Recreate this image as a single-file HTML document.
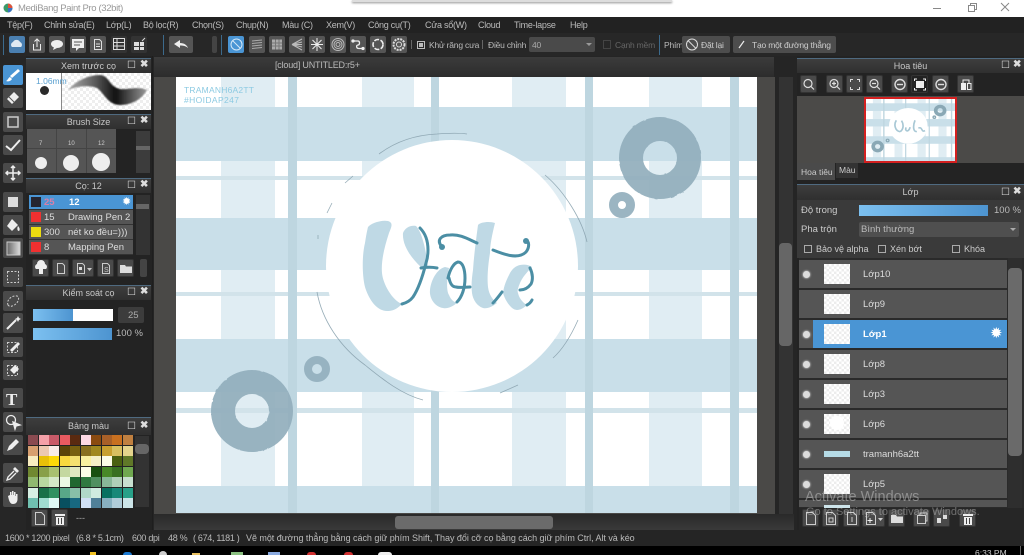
<!DOCTYPE html>
<html lang="vi"><head><meta charset="utf-8"><title>MediBang Paint Pro</title>
<style>
*{box-sizing:border-box}
html,body{margin:0;padding:0;width:1024px;height:555px;overflow:hidden;background:#1e1e1e}
body{position:relative;font-family:"Liberation Sans","Noto Sans CJK SC",sans-serif;color:#ccc;font-size:9px;filter:blur(.3px)}
div,span.a,svg.a{position:absolute}
.t{white-space:nowrap;line-height:1}
.m{top:21px;font-size:9px;letter-spacing:-.25px;color:#bbb;white-space:nowrap;line-height:1}
.o{top:41px;font-size:8.5px;letter-spacing:-.2px;color:#bbb;white-space:nowrap;line-height:1}
.st{top:534px;font-size:9px;letter-spacing:-.3px;color:#bbb;white-space:nowrap;line-height:1}
.h{background:linear-gradient(#3d3d3d,#2f2f2f);border-top:1px solid #4f6a80;color:#c8c8c8;text-align:center;font-size:9px;line-height:14px}
.tb{background:#4a4a4a;border-radius:2px;width:20px;height:20px;left:3px}
.tb svg{position:absolute;left:0;top:0}
.b{background:#555;border-radius:2px;width:16px;height:17px;top:36px}
.b svg{position:absolute;left:0;top:0}
.sb{background:#4a4a4a;border:1px solid #333;border-radius:2px}
.sb svg{position:absolute;left:0;top:0}
.x{font-weight:bold;color:#ddd;font-size:10px}
.r{left:799px;width:208px;height:29px;background:#555;border-bottom:1px solid #2a2a2a}
.e{left:803px;width:7px;height:7px;border-radius:50%;background:#ddd;box-shadow:0 0 2px #fff}
.th{left:824px;width:26px;height:20px;background-color:#fff;background-image:linear-gradient(45deg,#ececec 25%,transparent 25%,transparent 75%,#ececec 75%),linear-gradient(45deg,#ececec 25%,transparent 25%,transparent 75%,#ececec 75%);background-size:5px 5px;background-position:0 0,2.5px 2.5px}
.n{left:863px;font-size:9.5px;color:#ddd}
.ck{width:8px;height:8px;border:1px solid #aaa;top:245px}
.p{width:10px;height:9.5px}
.br{left:29px;width:104px;height:15px;background:#555;border-bottom:1px solid #333;font-size:9.5px;line-height:15px;color:#ddd}
</style></head><body>

<!-- title bar -->
<div style="left:0;top:0;width:1024px;height:17px;background:#fff"></div>
<div style="left:352px;top:0;width:320px;height:2px;background:#ddd;box-shadow:0 1px 2px #888"></div>
<svg class="a" style="left:3px;top:3px" width="11" height="11"><circle cx="5" cy="5" r="4.5" fill="#3a9a6a"/><path d="M5 5V.5A4.5 4.5 0 0 1 9.5 5Z" fill="#e0503a"/><path d="M5 5H9.5A4.5 4.5 0 0 1 5 9.5Z" fill="#3a70c0"/></svg>
<div class="t" style="left:18px;top:4px;font-size:9.5px;letter-spacing:-.35px;color:#999">MediBang Paint Pro (32bit)</div>
<svg class="a" style="left:925px;top:2px" width="99" height="14" fill="none" stroke="#888"><path d="M8 6.500H16"/><rect x="43.500" y="3.500" width="6" height="6"/><path d="M45.500 3.500V1.500H51.500V7.500H49.500"/><path d="M76 1L84 9M84 1L76 9"/></svg>

<!-- menu -->
<div style="left:0;top:17px;width:1024px;height:16px;background:#222"></div>
<div class="m" style="left:7px">Tệp(F)</div>
<div class="m" style="left:44px">Chỉnh sửa(E)</div>
<div class="m" style="left:106px">Lớp(L)</div>
<div class="m" style="left:143px">Bộ lọc(R)</div>
<div class="m" style="left:192px">Chọn(S)</div>
<div class="m" style="left:236px">Chụp(N)</div>
<div class="m" style="left:282px">Màu (C)</div>
<div class="m" style="left:326px">Xem(V)</div>
<div class="m" style="left:368px">Công cụ(T)</div>
<div class="m" style="left:425px">Cửa sổ(W)</div>
<div class="m" style="left:478px">Cloud</div>
<div class="m" style="left:514px">Time-lapse</div>
<div class="m" style="left:570px">Help</div>

<!-- toolbar -->
<div style="left:0;top:33px;width:1024px;height:23px;background:#272727"></div>
<div style="left:3px;top:35px;width:1px;height:20px;background:#3c6a8c"></div>
<div style="left:163px;top:35px;width:1px;height:20px;background:#3c6a8c"></div>
<div style="left:221px;top:35px;width:1px;height:20px;background:#3c6a8c"></div>
<div style="left:659px;top:35px;width:1px;height:20px;background:#3c6a8c"></div>
<div class="b" style="left:9px;background:#4a7fb0"><svg width="16" height="17"><path d="M3 11a3 3 0 0 1 1-5a4 4 0 0 1 7 0a3 3 0 0 1 1 5Z" fill="#dfe9f2"/></svg></div>
<div class="b" style="left:29px"><svg width="16" height="17" fill="none" stroke="#eee"><path d="M4.500 8V14H11.500V8M8 11V3M5.500 5.500L8 3L10.500 5.500"/></svg></div>
<div class="b" style="left:49px"><svg width="16" height="17"><ellipse cx="8" cy="8" rx="6" ry="4" fill="#eee"/><path d="M5 11L4 14L8 12Z" fill="#eee"/></svg></div>
<div class="b" style="left:70px"><svg width="16" height="17"><rect x="2" y="3" width="12" height="9" fill="#eee"/><path d="M4 6H12M4 9H10" stroke="#555"/><path d="M6 12L6 15L9 12Z" fill="#eee"/></svg></div>
<div class="b" style="left:90px"><svg width="16" height="17" fill="none" stroke="#ddd"><path d="M4.500 3.500H9.500L11.500 5.500V13.500H4.500ZM6 8H10M6 10.500H10"/></svg></div>
<div class="b" style="left:111px;background:#333"><svg width="16" height="17" fill="none" stroke="#ddd"><rect x="2.500" y="2.500" width="11" height="11"/><path d="M2.500 6.500H13.500M2.500 10H13.500M6 2.500V13.500"/></svg></div>
<div class="b" style="left:131px;background:#333"><svg width="16" height="17"><path d="M3 6H8V10H3ZM9 6H13V10H9ZM3 11H8V14H3ZM9 11H13V14H9Z" fill="#ddd"/><path d="M11 5L14 2" stroke="#ddd"/></svg></div>
<div class="b" style="left:169px;width:24px"><svg width="24" height="17"><path d="M5 8L11 4V7C15 7 18 9 19 12C17 10 14 9.500 11 9.500V12Z" fill="#eee"/></svg></div>
<div style="left:212px;top:36px;width:5px;height:17px;background:#444;border-radius:2px"></div>
<div class="b" style="left:228px;background:#4a95d4"><svg width="17" height="17" fill="none" stroke="#d5e8f7"><circle cx="8.500" cy="8.500" r="5.500"/><path d="M4.500 4.500L12.500 12.500"/></svg></div>
<div class="b" style="left:249px"><svg width="16" height="17" fill="none" stroke="#aaa"><path d="M3 5L13 4M3 7.500L13 6.500M3 10L13 9M3 12.500L13 11.500"/></svg></div>
<div class="b" style="left:269px"><svg width="16" height="17"><rect x="3" y="3.500" width="10" height="10" fill="#aaa"/><path d="M3 7H13M3 10H13M6.500 3.500V13.500M10 3.500V13.500" stroke="#777"/></svg></div>
<div class="b" style="left:289px"><svg width="16" height="17" fill="none" stroke="#bbb"><path d="M3 8.500L13 3M3 8.500L13 6M3 8.500H13M3 8.500L13 11M3 8.500L13 14"/></svg></div>
<div class="b" style="left:309px"><svg width="16" height="17" stroke="#eee"><path d="M8 2V15M2 8.500H14M3.500 4L12.500 13M12.500 4L3.500 13"/></svg></div>
<div class="b" style="left:330px"><svg width="16" height="17" fill="none" stroke="#bbb"><circle cx="8" cy="8.500" r="6"/><circle cx="8" cy="8.500" r="4"/><circle cx="8" cy="8.500" r="2"/></svg></div>
<div class="b" style="left:350px"><svg width="16" height="17" fill="none" stroke="#eee" stroke-width="1.300"><path d="M3 5H8C10 5 10 9 8 9C6 9 6 12.500 9 12.500H13"/><circle cx="3" cy="5" r="1" fill="#eee"/><circle cx="13" cy="12.500" r="1" fill="#eee"/></svg></div>
<div class="b" style="left:370px"><svg width="16" height="17" fill="none" stroke="#eee" stroke-width="1.600"><circle cx="8" cy="8.500" r="5" stroke-dasharray="5 1.500"/></svg></div>
<div class="b" style="left:391px"><svg width="16" height="17" fill="none" stroke="#ddd"><circle cx="8" cy="8.500" r="5.500" stroke-dasharray="2 1" stroke-width="2"/><circle cx="8" cy="8.500" r="2.500"/></svg></div>
<div style="left:411px;top:40px;width:1px;height:9px;background:#666"></div>
<div style="left:417px;top:41px;width:8px;height:8px;border:1px solid #bbb"></div>
<div style="left:419px;top:43px;width:4px;height:4px;background:#bbb"></div>
<div class="o" style="left:429px">Khử răng cưa</div>
<div style="left:482px;top:40px;width:1px;height:9px;background:#666"></div>
<div class="o" style="left:488px">Điều chỉnh</div>
<div style="left:529px;top:37px;width:66px;height:15px;background:#4a4a4a;border-radius:2px"></div>
<div class="o" style="left:532px;color:#aaa">40</div>
<div class="t" style="left:586px;top:43px;width:0;height:0;border:3px solid transparent;border-top:3px solid #999"></div>
<div style="left:603px;top:40px;width:8px;height:9px;border:1px solid #444"></div>
<div class="o" style="left:615px;color:#666">Cạnh mềm</div>
<div class="o" style="left:664px">Phím</div>
<div class="sb" style="left:682px;top:36px;width:48px;height:17px;background:#4d4d4d;border:0"><svg width="20" height="17" fill="none" stroke="#ddd"><circle cx="10" cy="8.500" r="5.500"/><path d="M6 4.500L14 12.500"/></svg></div>
<div class="o" style="left:701px;color:#ccc">Đặt lại</div>
<div class="sb" style="left:733px;top:36px;width:103px;height:17px;background:#4d4d4d;border:0"><svg width="20" height="17" fill="none" stroke="#eee" stroke-width="1.200"><path d="M6 12L11 5"/></svg></div>
<div class="o" style="left:752px;color:#ccc">Tạo một đường thẳng</div>

<!-- center -->
<div style="left:153px;top:56px;width:644px;height:474px;background:#252525"></div>
<div style="left:154px;top:57px;width:620px;height:20px;background:linear-gradient(#3b3b3b,#2c2c2c)"></div>
<div class="t" style="left:275px;top:61px;font-size:9px;letter-spacing:-.2px;color:#bbb">[cloud] UNTITLED:r5+</div>
<div style="left:154px;top:77px;width:621px;height:437px;background:#4a4947"></div>
<div style="left:176px;top:77px;width:581px;height:436px;background:#fff;overflow:hidden">
<svg width="581" height="436" style="position:absolute;left:0;top:0">
<defs><filter id="rough" x="-10%" y="-10%" width="120%" height="120%"><feTurbulence type="fractalNoise" baseFrequency=".18" numOctaves="1" seed="4"/><feDisplacementMap in="SourceGraphic" scale="1.500"/></filter></defs>
<g fill="#e0edf3"><path d="M45 0H99V436H45Z"/><path d="M186 0H238V436H186Z"/><path d="M336 0H390V436H336Z"/><path d="M473 0H526V436H473Z"/></g>
<g fill="#c9dfe9"><rect y="30" width="581" height="54"/><rect y="141" width="581" height="52"/><rect y="262" width="581" height="53"/><rect y="409" width="581" height="27"/></g>
<g fill="#d2e3ea"><rect y="99" width="581" height="4"/><rect y="215" width="581" height="4"/><rect y="331" width="581" height="5"/></g>
<g fill="#bed6e0"><rect x="112" width="9" height="436"/><rect x="255" width="8" height="436"/><rect x="409" width="8" height="436"/><rect x="554" width="9" height="436"/></g>
<circle cx="276" cy="189" r="126" fill="#fff"/>
<g fill="none" stroke="#8ba3af" stroke-width=".8" opacity=".9" transform="translate(-176 -77)">
<path d="M379 154C395 142 415 135 437 134C450 133 460 133 467 134"/>
<path d="M353 176L345 183M332 203L327 213M318 235L318 239"/>
<path d="M317 292C322 320 340 347 365 365C380 377 400 394 423 400"/>
<path d="M545 175C565 192 582 220 587 242"/>
<path d="M578 320C570 338 562 350 553 358"/>
<path d="M518 385L500 393"/>
</g>
<g fill="none" stroke="#93afbd" opacity=".93" filter="url(#rough)">
<circle cx="484" cy="81" r="29" stroke-width="24"/>
<circle cx="76" cy="334" r="29" stroke-width="24"/>
</g>
<g fill="none" stroke="#93afbd" opacity=".93">
<circle cx="446" cy="128" r="8.500" stroke-width="9"/>
<circle cx="141" cy="292" r="9" stroke-width="8"/>
</g>
<text x="8" y="16" font-family="Liberation Sans" font-size="8.500" fill="#8ccae2" textLength="70">TRAMANH6A2TT</text>
<text x="8" y="26" font-family="Liberation Sans" font-size="8.500" fill="#8ccae2" textLength="55">#HOIDAP247</text>
<g transform="translate(-176 -77)">
<g fill="#bfd9e5">
<path d="M368 227C372 222 386 219 390 222C393 224 391 228 389 233C384 248 381 262 382 273C383 284 392 300 402 304C396 310 392 311 387 311C377 311 369 300 365 287C362 275 362 255 365 243C366 236 367 231 368 227Z"/>
<path d="M403 233C405 228 410 225 416 226C422 232 426 250 428 267L421 267C411 258 402 245 403 233Z"/>
<path d="M430 290C431 280 437 269 445 267L449 268C447 278 446 290 449 295C451 300 454 302 457 303C452 307 447 309 443 308C435 307 429 298 430 290Z"/>
<path d="M478 225C480 222 490 221 495 223C492 235 490 245 490 253C488 265 487 278 488 287C489 295 493 300 497 303C492 307 487 309 483 308C477 306 473 300 472 293C471 285 472 277 473 270C474 255 476 240 478 225Z"/>
<path d="M503 293C504 285 507 279 510 273C513 268 516 266 520 265C525 264 529 265 532 267C527 272 522 278 520 283C518 288 517 291 518 293C519 298 523 303 527 305C524 308 520 310 517 310C511 310 505 300 503 293Z"/>
</g>
<g fill="none" stroke="#4b8ea4" stroke-width="3" stroke-linecap="round">
<path d="M420 228C426 234 428 242 428 250C428 256 427 260 426 263C423 275 419 288 413 297C410 301 406 303 402 304"/>
<path d="M421 268C427 267 432 267 437 268"/>
<path d="M448 278C450 269 454 263 458 262C463 262 465 270 465 278C465 288 462 297 457 302"/>
<path d="M449 278C450 283 452 287 456 287C460 288 465 287 470 287"/>
<path d="M442 247C436 240 441 235 450 235C460 234 468 239 477 243"/>
<path d="M493 250C503 254 518 260 526 252C530 247 529 241 526 240"/>
<path d="M502 292C499 296 496 300 493 303"/>
<path d="M530 268C533 274 533 280 531 284C528 288 524 290 520 290"/>
<path d="M532 300C531 302 529 304 527 305"/>
</g>
<circle cx="442" cy="247" r="3" fill="#4b8ea4"/><circle cx="526" cy="241" r="3" fill="#4b8ea4"/>
</g>
</svg>
</div>
<div style="left:779px;top:77px;width:14px;height:437px;background:#333"></div>
<div style="left:779px;top:243px;width:13px;height:103px;background:#666;border-radius:4px"></div>
<div style="left:154px;top:514px;width:640px;height:16px;background:linear-gradient(#2a2a2a,#3a3a3a)"></div>
<div style="left:395px;top:516px;width:158px;height:13px;background:#6b6b6b;border-radius:3px"></div>

<!-- left tools -->
<div style="left:0;top:56px;width:26px;height:474px;background:#262626"></div>
<div class="tb" style="top:65px;background:#4a95d4"><svg width="20" height="20"><path d="M15 4L17 6L9 13L7 11Z" fill="#fff"/><path d="M7 12L9 14C8 16 5 17 3 16C5 15 5 13 7 12Z" fill="#fff"/></svg></div>
<div class="tb" style="top:88px"><svg width="20" height="20"><path d="M4 11L11 4L16 9L9 16Z" fill="#eee"/><path d="M6 9L11 14" stroke="#555"/></svg></div>
<div class="tb" style="top:112px"><svg width="20" height="20" fill="none" stroke="#ccc" stroke-width="1.500"><rect x="5" y="5" width="10" height="10"/></svg></div>
<div class="tb" style="top:135px"><svg width="20" height="20" fill="none" stroke="#eee" stroke-width="2"><path d="M3 11L8 15L17 5"/></svg></div>
<div class="tb" style="top:163px"><svg width="20" height="20" fill="none" stroke="#eee" stroke-width="1.500"><path d="M10 3V17M3 10H17M8 5L10 3L12 5M8 15L10 17L12 15M5 8L3 10L5 12M15 8L17 10L15 12"/></svg></div>
<div class="tb" style="top:192px"><svg width="20" height="20"><rect x="5" y="5" width="10" height="10" fill="#ddd"/></svg></div>
<div class="tb" style="top:215px"><svg width="20" height="20"><path d="M9 4L15 10L9 16L4 11Z" fill="#eee"/><path d="M15 11C17 13 17 15 16 16C14 16 14 13 15 11Z" fill="#eee"/></svg></div>
<div class="tb" style="top:238px"><svg width="20" height="20"><defs><linearGradient id="g1"><stop offset="0" stop-color="#666"/><stop offset="1" stop-color="#ddd"/></linearGradient></defs><rect x="4" y="4" width="13" height="13" fill="url(#g1)" stroke="#ccc"/></svg></div>
<div class="tb" style="top:267px"><svg width="20" height="20" fill="none" stroke="#ccc" stroke-dasharray="2 1.500"><rect x="4.500" y="4.500" width="11" height="11"/></svg></div>
<div class="tb" style="top:291px"><svg width="20" height="20" fill="none" stroke="#ccc" stroke-dasharray="2 1.500"><path d="M5 14C3 9 9 4 14 5C18 7 14 14 9 15C7 16 6 15 5 14Z"/></svg></div>
<div class="tb" style="top:313px"><svg width="20" height="20"><path d="M4 16L13 7" stroke="#eee" stroke-width="2"/><path d="M15 3L16 5L18 6L16 7L15 9L14 7L12 6L14 5Z" fill="#eee"/></svg></div>
<div class="tb" style="top:337px"><svg width="20" height="20"><rect x="4.500" y="5.500" width="10" height="10" fill="none" stroke="#ccc" stroke-dasharray="2 1.500"/><path d="M7 13L15 5L17 7L9 15Z" fill="#eee"/></svg></div>
<div class="tb" style="top:360px"><svg width="20" height="20"><rect x="4.500" y="5.500" width="10" height="10" fill="none" stroke="#ccc" stroke-dasharray="2 1.500"/><path d="M7 10L12 5L16 9L11 14Z" fill="#eee"/></svg></div>
<div class="tb" style="top:388px"><div class="t" style="left:3px;top:2px;font:bold 17px 'Liberation Serif',serif;color:#eee">T</div></div>
<div class="tb" style="top:412px"><svg width="20" height="20" fill="none" stroke="#eee" stroke-width="1.300"><circle cx="8" cy="8" r="4.500"/><path d="M10 10L17 13L13 14L12 17Z" fill="#eee"/></svg></div>
<div class="tb" style="top:435px"><svg width="20" height="20"><path d="M4 16L6 11L13 4L16 7L9 14Z" fill="#eee"/></svg></div>
<div class="tb" style="top:463px"><svg width="20" height="20"><path d="M12 4L16 8L14 10L10 6Z" fill="#eee"/><path d="M11 8L5 14L4 17L7 16L13 10" fill="none" stroke="#eee" stroke-width="1.300"/></svg></div>
<div class="tb" style="top:487px"><svg width="20" height="20"><path d="M5 9L7 8V5H8.500V8H9V4H10.500V8H11V5H12.500V9H13V7H14.500V12C14.500 15 13 17 10 17C7 17 6 14 5 9Z" fill="#eee"/></svg></div>

<!-- brush preview -->
<div style="left:26px;top:56px;width:126px;height:474px;background:#232323"></div>
<div class="h" style="left:26px;top:58px;width:125px;height:15px">Xem trước cọ</div>
<div class="t x" style="left:127px;top:61px;font-weight:normal">☐</div><div class="t x" style="left:140px;top:60px">✖</div>
<div style="left:26px;top:73px;width:125px;height:37px;background-color:#fff;background-image:linear-gradient(45deg,#eee 25%,transparent 25%,transparent 75%,#eee 75%),linear-gradient(45deg,#eee 25%,transparent 25%,transparent 75%,#eee 75%);background-size:6px 6px;background-position:0 0,3px 3px"></div>
<div style="left:26px;top:73px;width:36px;height:37px;background:#fff;border-right:1px solid #888"></div>
<div class="t" style="left:36px;top:77px;font-size:8.500px;color:#5aa0d0">1.06mm</div>
<div style="left:40px;top:86px;width:9px;height:9px;border-radius:50%;background:#2a2a2a"></div>
<svg class="a" style="left:62px;top:73px" width="89" height="37"><defs><linearGradient id="s" x1="0" x2="1"><stop offset="0" stop-color="#aaa"/><stop offset=".3" stop-color="#666"/><stop offset=".6" stop-color="#111"/><stop offset="1" stop-color="#999"/></linearGradient><filter id="sf"><feGaussianBlur stdDeviation=".8"/></filter></defs><path d="M6 17C14 8 26 2 38 2C48 3 46 13 58 16C66 17 76 13 85 17C80 26 70 32 58 32C46 32 42 20 35 15C27 12 16 13 6 17Z" fill="url(#s)" filter="url(#sf)"/></svg>

<!-- brush size -->
<div class="h" style="left:26px;top:114px;width:125px;height:15px">Brush Size</div>
<div class="t x" style="left:127px;top:117px;font-weight:normal">☐</div><div class="t x" style="left:140px;top:116px">✖</div>
<div style="left:27px;top:129px;width:89px;height:44px;background:#555"></div>
<div style="left:27px;top:148px;width:89px;height:1px;background:#444"></div>
<div style="left:56px;top:129px;width:1px;height:44px;background:#444"></div>
<div style="left:86px;top:129px;width:1px;height:44px;background:#444"></div>
<div class="t" style="left:39px;top:141px;font-size:6px;color:#ccc">7</div>
<div class="t" style="left:68px;top:141px;font-size:6px;color:#ccc">10</div>
<div class="t" style="left:98px;top:141px;font-size:6px;color:#ccc">12</div>
<div style="left:35px;top:157px;width:12px;height:12px;border-radius:50%;background:#eee"></div>
<div style="left:63px;top:155px;width:16px;height:16px;border-radius:50%;background:#eee"></div>
<div style="left:92px;top:153px;width:18px;height:18px;border-radius:50%;background:#eee"></div>
<div style="left:136px;top:131px;width:14px;height:42px;background:#3c3c3c"></div>
<div style="left:136px;top:146px;width:14px;height:4px;background:#666"></div>

<!-- brush list -->
<div class="h" style="left:26px;top:178px;width:125px;height:15px">Cọ: 12</div>
<div class="t x" style="left:127px;top:181px;font-weight:normal">☐</div><div class="t x" style="left:140px;top:180px">✖</div>
<div style="left:29px;top:195px;width:104px;height:60px;background:#555"></div>
<div class="br" style="top:195px;background:#4a95d4;color:#fff;font-weight:bold"><span class="a" style="left:15px;color:#d87fa8;top:0">25</span><span class="a" style="left:40px;top:0">12</span></div>
<div class="br" style="top:210px"><span class="a" style="left:15px;top:0">15</span><span class="a" style="left:39px;top:0">Drawing Pen 2</span></div>
<div class="br" style="top:225px"><span class="a" style="left:15px;top:0">300</span><span class="a" style="left:39px;top:0;white-space:nowrap">nét ko đều=)))</span></div>
<div class="br" style="top:240px"><span class="a" style="left:15px;top:0">8</span><span class="a" style="left:39px;top:0">Mapping Pen</span></div>
<div style="left:31px;top:197px;width:10px;height:10px;background:#252530"></div>
<div style="left:31px;top:212px;width:10px;height:10px;background:#f03030"></div>
<div style="left:31px;top:227px;width:10px;height:10px;background:#ecdc10"></div>
<div style="left:31px;top:242px;width:10px;height:10px;background:#f03030"></div>
<div class="t" style="left:122px;top:197px;font-size:11px;color:#fff">✹</div>
<div style="left:136px;top:195px;width:14px;height:60px;background:#333"></div>
<div style="left:136px;top:204px;width:13px;height:5px;background:#666"></div>
<div class="sb" style="left:32px;top:259px;width:17px;height:18px"><svg width="16" height="17"><path d="M3 9A3 3 0 0 1 4 4A4 4 0 0 1 12 4A3 3 0 0 1 13 9H10V14H6V9Z" fill="#eee"/></svg></div>
<div class="sb" style="left:52px;top:259px;width:17px;height:18px"><svg width="16" height="17" fill="none" stroke="#ccc"><path d="M4.500 3.500H9.500L11.500 5.500V13.500H4.500Z"/></svg></div>
<div class="sb" style="left:72px;top:259px;width:22px;height:18px"><svg width="20" height="17"><path d="M4.500 3.500H9.500L11.500 5.500V13.500H4.500Z" fill="none" stroke="#ccc"/><rect x="6" y="7" width="3" height="3" fill="#ddd"/><path d="M14 8H19L16.500 11Z" fill="#ccc"/></svg></div>
<div class="sb" style="left:97px;top:259px;width:17px;height:18px"><svg width="16" height="17" fill="none" stroke="#ccc"><path d="M4.500 3.500H9.500L11.500 5.500V13.500H4.500Z"/><text x="6" y="12" font-size="7" fill="#ccc" stroke="none" font-family="Liberation Sans">S</text></svg></div>
<div class="sb" style="left:117px;top:259px;width:17px;height:18px"><svg width="16" height="17"><path d="M2 5H7L8 6.500H14V13H2Z" fill="#ddd"/></svg></div>
<div style="left:140px;top:259px;width:7px;height:18px;background:#444;border-radius:2px"></div>

<!-- brush control -->
<div class="h" style="left:26px;top:285px;width:125px;height:15px">Kiểm soát cọ</div>
<div class="t x" style="left:127px;top:288px;font-weight:normal">☐</div><div class="t x" style="left:140px;top:287px">✖</div>
<div style="left:33px;top:309px;width:80px;height:12px;background:#fff"></div>
<div style="left:33px;top:309px;width:40px;height:12px;background:linear-gradient(90deg,#7cc0f0,#4d94d0)"></div>
<div style="left:118px;top:307px;width:26px;height:16px;background:#3c3c3c;border-radius:2px"></div>
<div class="t" style="left:128px;top:311px;font-size:9.500px;color:#aaa">25</div>
<div style="left:33px;top:328px;width:79px;height:12px;background:linear-gradient(90deg,#7cc0f0,#4d94d0)"></div>
<div class="t" style="left:116px;top:329px;font-size:9.500px;color:#bbb">100 %</div>

<!-- palette -->
<div class="h" style="left:26px;top:417px;width:125px;height:18px;line-height:17px">Bảng màu</div>
<div class="t x" style="left:127px;top:422px;font-weight:normal">☐</div><div class="t x" style="left:140px;top:421px">✖</div>
<div class="p" style="left:28px;top:435px;background:#8a4a50"></div><div class="p" style="left:39px;top:435px;background:#f4a0a8"></div><div class="p" style="left:49px;top:435px;background:#c85a68"></div><div class="p" style="left:60px;top:435px;background:#e85a60"></div><div class="p" style="left:70px;top:435px;background:#5a2a10"></div><div class="p" style="left:81px;top:435px;background:#fcd8e4"></div><div class="p" style="left:91px;top:435px;background:#8a4a10"></div><div class="p" style="left:102px;top:435px;background:#a86028"></div><div class="p" style="left:112px;top:435px;background:#c87020"></div><div class="p" style="left:123px;top:435px;background:#c08040"></div>
<div class="p" style="left:28px;top:446px;background:#d8a070"></div><div class="p" style="left:39px;top:446px;background:#ecc8b0"></div><div class="p" style="left:49px;top:446px;background:#f8ece8"></div><div class="p" style="left:60px;top:446px;background:#5a4408"></div><div class="p" style="left:70px;top:446px;background:#786010"></div><div class="p" style="left:81px;top:446px;background:#887020"></div><div class="p" style="left:91px;top:446px;background:#a08820"></div><div class="p" style="left:102px;top:446px;background:#c8a030"></div><div class="p" style="left:112px;top:446px;background:#d8c060"></div><div class="p" style="left:123px;top:446px;background:#e4d48c"></div>
<div class="p" style="left:28px;top:456px;background:#f8ecc0"></div><div class="p" style="left:39px;top:456px;background:#e8c008"></div><div class="p" style="left:49px;top:456px;background:#fcd808"></div><div class="p" style="left:60px;top:456px;background:#f8d840"></div><div class="p" style="left:70px;top:456px;background:#f4e070"></div><div class="p" style="left:81px;top:456px;background:#f8f0a0"></div><div class="p" style="left:91px;top:456px;background:#f4f0c8"></div><div class="p" style="left:102px;top:456px;background:#fcfce8"></div><div class="p" style="left:112px;top:456px;background:#4a6010"></div><div class="p" style="left:123px;top:456px;background:#607828"></div>
<div class="p" style="left:28px;top:467px;background:#708830"></div><div class="p" style="left:39px;top:467px;background:#88a048"></div><div class="p" style="left:49px;top:467px;background:#a8c070"></div><div class="p" style="left:60px;top:467px;background:#c4d8a0"></div><div class="p" style="left:70px;top:467px;background:#e0e8c0"></div><div class="p" style="left:81px;top:467px;background:#fcfce8"></div><div class="p" style="left:91px;top:467px;background:#185010"></div><div class="p" style="left:102px;top:467px;background:#488828"></div><div class="p" style="left:112px;top:467px;background:#387020"></div><div class="p" style="left:123px;top:467px;background:#70a850"></div>
<div class="p" style="left:28px;top:477px;background:#90b870"></div><div class="p" style="left:39px;top:477px;background:#b8d8a0"></div><div class="p" style="left:49px;top:477px;background:#d4e8c8"></div><div class="p" style="left:60px;top:477px;background:#ecf8e4"></div><div class="p" style="left:70px;top:477px;background:#206830"></div><div class="p" style="left:81px;top:477px;background:#307840"></div><div class="p" style="left:91px;top:477px;background:#509060"></div><div class="p" style="left:102px;top:477px;background:#88b898"></div><div class="p" style="left:112px;top:477px;background:#b0d0b8"></div><div class="p" style="left:123px;top:477px;background:#c8e0d0"></div>
<div class="p" style="left:28px;top:488px;background:#d8f0e4"></div><div class="p" style="left:39px;top:488px;background:#187048"></div><div class="p" style="left:49px;top:488px;background:#309060"></div><div class="p" style="left:60px;top:488px;background:#58a888"></div><div class="p" style="left:70px;top:488px;background:#88c0a8"></div><div class="p" style="left:81px;top:488px;background:#b0d8c8"></div><div class="p" style="left:91px;top:488px;background:#d0ece0"></div><div class="p" style="left:102px;top:488px;background:#087060"></div><div class="p" style="left:112px;top:488px;background:#188878"></div><div class="p" style="left:123px;top:488px;background:#28a088"></div>
<div class="p" style="left:28px;top:498px;background:#70c0b0"></div><div class="p" style="left:39px;top:498px;background:#a0dcd0"></div><div class="p" style="left:49px;top:498px;background:#e0f8f4"></div><div class="p" style="left:60px;top:498px;background:#085060"></div><div class="p" style="left:70px;top:498px;background:#186880"></div><div class="p" style="left:81px;top:498px;background:#d0e0f4"></div><div class="p" style="left:91px;top:498px;background:#508098"></div><div class="p" style="left:102px;top:498px;background:#88b0c0"></div><div class="p" style="left:112px;top:498px;background:#b0ccd8"></div><div class="p" style="left:123px;top:498px;background:#cce4e8"></div>
<div style="left:135px;top:436px;width:14px;height:71px;background:#333"></div>
<div style="left:135px;top:444px;width:14px;height:10px;background:#666;border-radius:4px"></div>
<div class="sb" style="left:31px;top:509px;width:17px;height:18px"><svg width="16" height="17" fill="none" stroke="#ccc"><path d="M3.500 2.500H9.500L12.500 5.500V14.500H3.500Z"/></svg></div>
<div class="sb" style="left:51px;top:509px;width:17px;height:18px"><svg width="16" height="17"><path d="M3 4H13V6H3ZM4 7H12V15H4Z" fill="#eee"/><path d="M6.500 8V14M9.500 8V14" stroke="#444"/></svg></div>
<div class="t" style="left:76px;top:514px;font-size:9px;color:#aaa">---</div>

<!-- navigator -->
<div style="left:797px;top:56px;width:227px;height:474px;background:#232323"></div>
<div class="h" style="left:797px;top:58px;width:227px;height:15px">Hoa tiêu</div>
<div class="t x" style="left:1001px;top:61px;font-weight:normal">☐</div><div class="t x" style="left:1013px;top:60px">✖</div>
<div class="sb" style="left:800px;top:75px;width:17px;height:18px"><svg width="16" height="17" fill="none" stroke="#ddd" stroke-width="1.200"><circle cx="7" cy="7.500" r="4"/><path d="M10 10.500L13 13.500"/></svg></div>
<div class="sb" style="left:826px;top:75px;width:17px;height:18px"><svg width="16" height="17" fill="none" stroke="#ddd" stroke-width="1.200"><circle cx="7" cy="7.500" r="4"/><path d="M10 10.500L13 13.500M5 7.500H9M7 5.500V9.500"/></svg></div>
<div class="sb" style="left:846px;top:75px;width:17px;height:18px"><svg width="16" height="17" fill="none" stroke="#ddd"><path d="M3.500 6V3.500H6M10 3.500H12.500V6M12.500 11V13.500H10M6 13.500H3.500V11"/></svg></div>
<div class="sb" style="left:866px;top:75px;width:17px;height:18px"><svg width="16" height="17" fill="none" stroke="#ddd" stroke-width="1.200"><circle cx="7" cy="7.500" r="4"/><path d="M10 10.500L13 13.500M5 7.500H9"/></svg></div>
<div class="sb" style="left:891px;top:75px;width:17px;height:18px"><svg width="16" height="17" fill="none" stroke="#ddd" stroke-width="1.400"><circle cx="8" cy="8.500" r="5"/><path d="M5 8.500H11"/></svg></div>
<div class="sb" style="left:911px;top:75px;width:17px;height:18px;background:#222"><svg width="16" height="17"><rect x="4" y="5" width="8" height="7" fill="#eee"/><path d="M2.500 5V3H5M11 3H13.500V5M13.500 12V14H11M5 14H2.500V12" fill="none" stroke="#eee"/></svg></div>
<div class="sb" style="left:932px;top:75px;width:17px;height:18px"><svg width="16" height="17" fill="none" stroke="#ddd" stroke-width="1.400"><circle cx="8" cy="8.500" r="5"/><path d="M5 8.500H11"/></svg></div>
<div class="sb" style="left:957px;top:75px;width:17px;height:18px"><svg width="16" height="17"><rect x="3" y="7" width="5" height="7" fill="#eee"/><path d="M9.500 7.500H13V13.500H9.500ZM5 7V4H11V7" fill="none" stroke="#eee"/></svg></div>
<div style="left:797px;top:96px;width:227px;height:67px;background:#4b4a48"></div>
<div style="left:864px;top:97px;width:93px;height:66px;background:#fff;border:2px solid #d32020;overflow:hidden">
<svg width="89" height="62" viewBox="0 0 581 436" preserveAspectRatio="none" style="position:absolute;left:0;top:0">
<g fill="#e0edf3"><rect x="45" width="54" height="436"/><rect x="186" width="52" height="436"/><rect x="336" width="54" height="436"/><rect x="473" width="53" height="436"/></g>
<g fill="#c9dfe9"><rect y="30" width="581" height="54"/><rect y="141" width="581" height="52"/><rect y="262" width="581" height="53"/><rect y="409" width="581" height="27"/></g>
<g fill="#bed6e0"><rect x="112" width="9" height="436"/><rect x="255" width="8" height="436"/><rect x="409" width="8" height="436"/><rect x="554" width="9" height="436"/></g>
<circle cx="276" cy="189" r="126" fill="#fff"/>
<g fill="none" stroke="#8aa8b5"><circle cx="484" cy="81" r="29" stroke-width="24"/><circle cx="446" cy="128" r="8" stroke-width="9"/><circle cx="141" cy="292" r="9" stroke-width="8"/><circle cx="76" cy="334" r="29" stroke-width="24"/></g>
<path d="M198 150C180 180 190 225 222 230M232 152C248 180 245 215 222 230M262 200C250 225 278 240 288 198M320 150C305 190 308 235 332 228M342 205C370 190 360 240 385 222" fill="none" stroke="#a8c8d5" stroke-width="11"/>
</svg>
</div>
<div style="left:797px;top:163px;width:38px;height:17px;background:#4a4a4a"></div>
<div class="t" style="left:801px;top:168px;font-size:8.500px;color:#ccc">Hoa tiêu</div>
<div style="left:836px;top:163px;width:22px;height:15px;background:#333"></div>
<div class="t" style="left:839px;top:166px;font-size:8.500px;color:#ccc">Màu</div>

<!-- layers -->
<div class="h" style="left:797px;top:184px;width:227px;height:16px">Lớp</div>
<div class="t x" style="left:1001px;top:188px;font-weight:normal">☐</div><div class="t x" style="left:1013px;top:187px">✖</div>
<div style="left:797px;top:200px;width:227px;height:58px;background:#3a3a3a"></div>
<div class="t" style="left:801px;top:206px;font-size:9.500px;color:#ccc">Độ trong</div>
<div style="left:859px;top:205px;width:129px;height:11px;background:linear-gradient(90deg,#7cc0f0,#4d94d0)"></div>
<div class="t" style="left:994px;top:206px;font-size:9.500px;color:#bbb">100 %</div>
<div class="t" style="left:801px;top:225px;font-size:9.500px;color:#ccc">Pha trộn</div>
<div style="left:859px;top:222px;width:160px;height:15px;background:#4f4f4f;border-radius:2px"></div>
<div class="t" style="left:861px;top:225px;font-size:9.500px;color:#bbb">Bình thường</div>
<div style="left:1010px;top:228px;width:0;height:0;border:3px solid transparent;border-top:3px solid #aaa"></div>
<div class="ck" style="left:804px"></div><div class="t" style="left:816px;top:245px;font-size:9px;color:#ccc">Bảo vệ alpha</div>
<div class="ck" style="left:878px"></div><div class="t" style="left:890px;top:245px;font-size:9px;color:#ccc">Xén bớt</div>
<div class="ck" style="left:952px"></div><div class="t" style="left:964px;top:245px;font-size:9px;color:#ccc">Khóa</div>

<div style="left:799px;top:258px;width:225px;height:250px;background:#2a2a2a"></div>
<div class="r" style="top:260px"></div><div class="e" style="top:271px"></div><div class="th" style="top:264px"></div><div class="t n" style="top:270px">Lớp10</div>
<div class="r" style="top:290px"></div><div class="th" style="top:294px"></div><div class="t n" style="top:300px">Lớp9</div>
<div class="r" style="top:320px"></div><div style="left:813px;top:320px;width:194px;height:28px;background:#4a95d4"></div><div class="e" style="top:331px"></div><div class="th" style="top:324px"></div><div class="t n" style="top:330px;font-weight:bold;color:#fff">Lớp1</div><div class="t" style="left:990px;top:326px;font-size:15px;color:#fff">✹</div>
<div class="r" style="top:350px"></div><div class="e" style="top:361px"></div><div class="th" style="top:354px"></div><div class="t n" style="top:360px">Lớp8</div>
<div class="r" style="top:380px"></div><div class="e" style="top:391px"></div><div class="th" style="top:384px"></div><div class="t n" style="top:390px">Lớp3</div>
<div class="r" style="top:410px"></div><div class="e" style="top:421px"></div><div class="th" style="top:414px"></div><div style="left:830px;top:416px;width:14px;height:14px;border-radius:50%;background:#fff"></div><div class="t n" style="top:420px">Lớp6</div>
<div class="r" style="top:440px"></div><div class="e" style="top:451px"></div><div style="left:824px;top:451px;width:26px;height:6px;background:#b5dbe6"></div><div class="t n" style="top:450px">tramanh6a2tt</div>
<div class="r" style="top:470px"></div><div class="e" style="top:481px"></div><div class="th" style="top:474px"></div><div class="t n" style="top:480px">Lớp5</div>
<div class="r" style="top:500px;height:8px"></div><div style="left:824px;top:505px;width:26px;height:3px;background:#cde4ea"></div>
<div style="left:1008px;top:258px;width:14px;height:250px;background:#2e2e2e"></div>
<div style="left:1008px;top:268px;width:14px;height:188px;background:#6a6a6a;border-radius:4px"></div>

<div style="left:799px;top:508px;width:225px;height:22px;background:#262626"></div>
<div class="sb" style="left:802px;top:509px;width:17px;height:18px"><svg width="16" height="17" fill="none" stroke="#ccc"><path d="M3.500 2.500H9.500L12.500 5.500V14.500H3.500Z"/></svg></div>
<div class="sb" style="left:822px;top:509px;width:17px;height:18px"><svg width="16" height="17" fill="none" stroke="#ccc"><path d="M3.500 2.500H9.500L12.500 5.500V14.500H3.500Z"/><rect x="6" y="8" width="4" height="4"/></svg></div>
<div class="sb" style="left:843px;top:509px;width:17px;height:18px"><svg width="16" height="17" fill="none" stroke="#ccc"><path d="M3.500 2.500H9.500L12.500 5.500V14.500H3.500ZM8 7V12"/></svg></div>
<div class="sb" style="left:862px;top:509px;width:23px;height:18px"><svg width="22" height="17"><path d="M3.500 2.500H9.500L12.500 5.500V14.500H3.500Z" fill="none" stroke="#ccc"/><path d="M7 8V13M4.500 10.500H9.500" stroke="#eee"/><path d="M15 8H20L17.500 11Z" fill="#ccc"/></svg></div>
<div class="sb" style="left:888px;top:509px;width:17px;height:18px"><svg width="16" height="17"><path d="M2 5H7L8 6.500H14V13H2Z" fill="#ddd"/></svg></div>
<div class="sb" style="left:913px;top:509px;width:17px;height:18px"><svg width="16" height="17" fill="none" stroke="#ccc"><rect x="3.500" y="5.500" width="8" height="8"/><path d="M6 5.500V3H13V11H11.500"/></svg></div>
<div class="sb" style="left:933px;top:509px;width:17px;height:18px"><svg width="16" height="17"><rect x="3" y="8" width="4" height="5" fill="#ddd"/><rect x="9" y="5" width="4" height="4" fill="#ddd"/></svg></div>
<div class="sb" style="left:959px;top:509px;width:17px;height:18px"><svg width="16" height="17"><path d="M3 4H13V6H3ZM4 7H12V15H4Z" fill="#eee"/><path d="M6.500 8V14M9.500 8V14" stroke="#444"/></svg></div>
<div class="t" style="left:805px;top:490px;font-size:14.500px;color:rgba(225,225,225,.42)">Activate Windows</div>
<div class="t" style="left:806px;top:507px;font-size:11px;color:rgba(225,225,225,.38)">Go to Settings to activate Windows.</div>

<!-- status -->
<div style="left:0;top:530px;width:1024px;height:16px;background:#252525"></div>
<div class="st" style="left:5px">1600 * 1200 pixel</div>
<div class="st" style="left:76px">(6.8 * 5.1cm)</div>
<div class="st" style="left:132px">600 dpi</div>
<div class="st" style="left:168px">48 %</div>
<div class="st" style="left:193px">( 674, 1181 )</div>
<div class="st" style="left:246px;letter-spacing:-.04px">Vẽ một đường thẳng bằng cách giữ phím Shift, Thay đổi cỡ cọ bằng cách giữ phím Ctrl, Alt và kéo</div>
<div style="left:0;top:546px;width:1024px;height:9px;background:#000"></div>
<div style="left:90px;top:552px;width:6px;height:3px;background:#f0c020"></div>
<div style="left:123px;top:552px;width:9px;height:3px;background:#1a78d0;border-radius:5px 5px 0 0"></div>
<div style="left:159px;top:551px;width:8px;height:4px;background:#ccc;border-radius:4px 4px 0 0"></div>
<div style="left:192px;top:553px;width:8px;height:2px;background:#e8c060"></div>
<div style="left:231px;top:552px;width:12px;height:3px;background:#8ac080"></div>
<div style="left:268px;top:552px;width:12px;height:3px;background:#8aaae0"></div>
<div style="left:307px;top:552px;width:9px;height:3px;background:#d03030;border-radius:5px 5px 0 0"></div>
<div style="left:344px;top:552px;width:9px;height:3px;background:#d03030;border-radius:5px 5px 0 0"></div>
<div style="left:378px;top:552px;width:14px;height:3px;background:#eee;border-radius:4px 4px 0 0"></div>
<div class="t" style="left:975px;top:549px;font-size:8.500px;color:#ccc">6:33 PM</div>
<div style="left:1020px;top:546px;width:1px;height:9px;background:#666"></div>
</body></html>
